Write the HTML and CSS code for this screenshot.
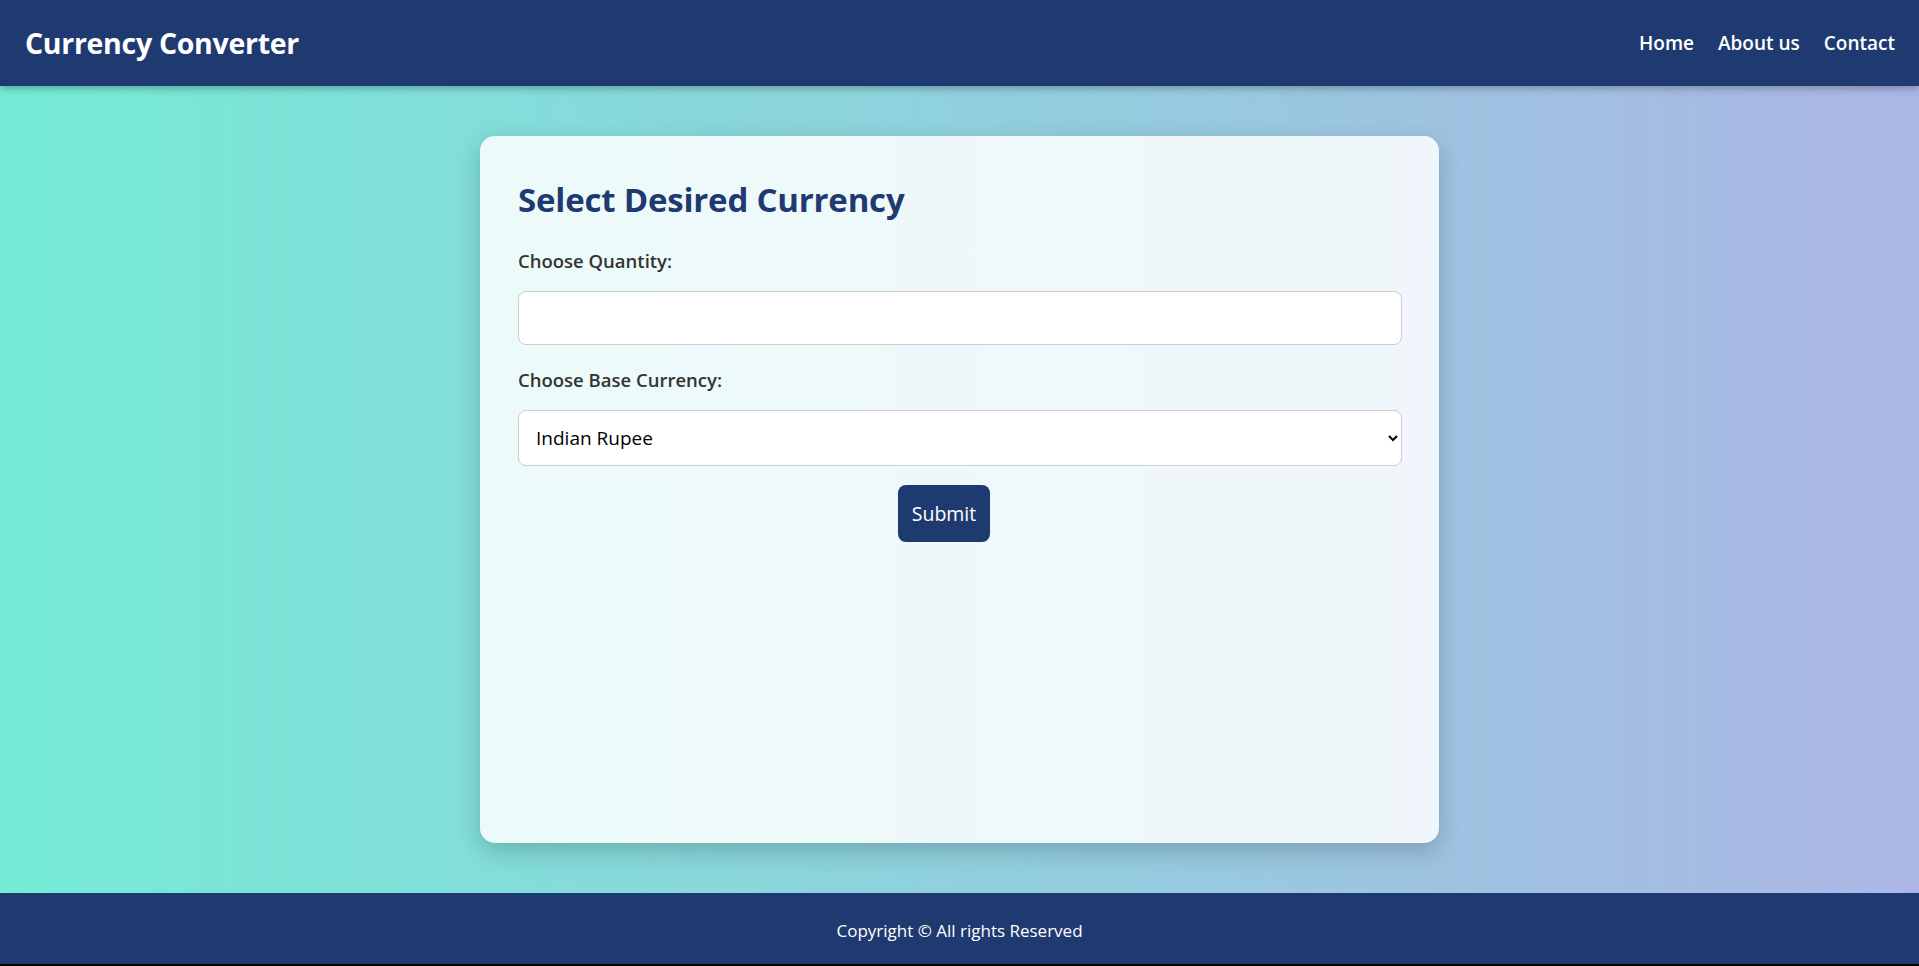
FILE: index.html
```html
<!DOCTYPE html>
<html lang="en">
<head>
<meta charset="utf-8">
<title>Currency Converter</title>
<link rel="stylesheet" href="styles.css">
</head>
<body>
<header class="topbar">
  <div class="brand">Currency Converter</div>
  <nav class="nav">
    <a href="#" class="nav-link">Home</a>
    <a href="#" class="nav-link">About us</a>
    <a href="#" class="nav-link">Contact</a>
  </nav>
</header>
<main class="main">
  <section class="card">
    <h1 class="card-title">Select Desired Currency</h1>
    <form class="form">
      <label class="label label-first" for="qty">Choose Quantity:</label>
      <input class="input" id="qty" type="text">
      <label class="label label-second" for="base">Choose Base Currency:</label>
      <select class="select" id="base">
        <option>Indian Rupee</option>
        <option>US Dollar</option>
        <option>Euro</option>
      </select>
      <div class="actions">
        <button type="button" class="btn">Submit</button>
      </div>
    </form>
  </section>
</main>
<footer class="footer">Copyright © All rights Reserved</footer>
</body>
</html>
```

FILE: styles.css
```css
* { box-sizing: border-box; }
html, body { margin: 0; padding: 0; }
body {
  min-height: 100vh;
  display: flex;
  flex-direction: column;
  font-family: "Open Sans", "Noto Sans", sans-serif;
  background: linear-gradient(to right, #74ebd5, #acb6e5);
}
.topbar {
  height: 86px;
  flex: 0 0 86px;
  background: #1f3a70;
  display: flex;
  align-items: center;
  justify-content: space-between;
  padding: 0 24px 0 25px;
  box-shadow: 0 2px 8px rgba(0,0,0,0.3);
  position: relative;
  z-index: 2;
}
.brand {
  color: #fff;
  font-weight: 700;
  font-size: 28.5px;
  letter-spacing: -0.3px;
}
.nav { display: flex; gap: 24px; }
.nav-link {
  color: #fff;
  text-decoration: none;
  font-weight: 600;
  font-size: 19px;
}
.main {
  flex: 1;
  display: flex;
  justify-content: center;
  padding: 50px 0 50px;
}
.card {
  width: 959px;
  background: rgba(255,255,255,0.85);
  border-radius: 15px;
  box-shadow: 0 8px 24px rgba(0,0,0,0.2);
  padding: 41px 37px 38px 38px;
}
.card-title {
  margin: 0;
  color: #1f3a70;
  font-size: 33px;
  font-weight: 700;
  line-height: 46px;
  letter-spacing: -0.2px;
}
.form { display: flex; flex-direction: column; }
.label {
  color: #333;
  font-size: 18.5px;
  font-weight: 600;
  line-height: 24px;
}
.label-first { margin-top: 26px; }
.label-second { margin-top: 23px; }
.input {
  margin-top: 18px;
  height: 54px;
  border: 1px solid #ccc;
  border-radius: 8px;
  background: #fff;
  font-family: inherit;
  font-size: 19px;
  padding: 0 18px;
}
.select {
  margin-top: 18px;
  height: 56px;
  border: 1px solid #ccc;
  border-radius: 8px;
  background: #fff;
  font-family: inherit;
  font-size: 19px;
  color: #000;
  padding: 0 13px;
}
.actions {
  margin-top: 19px;
  display: flex;
  justify-content: center;
}
.btn {
  height: 57px;
  width: 92px;
  background: #1f3a70;
  color: #fff;
  border: none;
  border-radius: 8px;
  font-family: inherit;
  font-size: 19.5px;
  cursor: pointer;
  margin-left: -32px;
}
.footer {
  flex: 0 0 73px;
  height: 73px;
  background: #1f3a70;
  color: #fff;
  display: flex;
  align-items: center;
  justify-content: center;
  font-size: 17px;
  padding-top: 3px;
  border-bottom: 2px solid #000;
}
```
